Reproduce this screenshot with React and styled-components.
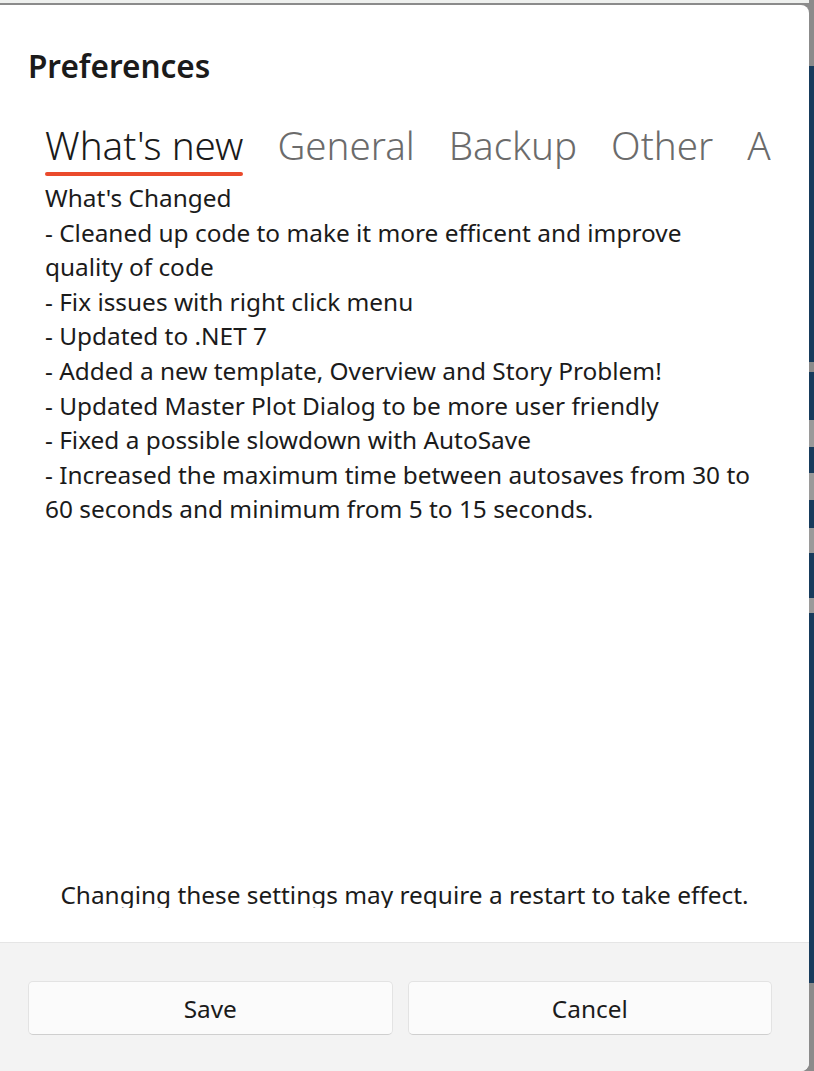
import React from 'react';
import styled, { createGlobalStyle } from 'styled-components';

const GlobalStyle = createGlobalStyle`
  html, body {
    margin: 0;
    padding: 0;
    background: #8b8b8b;
    overflow: hidden;
  }
  body {
    font-family: "Noto Sans", "Open Sans", sans-serif;
  }
`;

// backdrop behind the dialog
const Backdrop = styled.div`
  width: 814px;
  height: 1071px;
  display: flex;
  flex-direction: column;
  background: #8b8b8b;
`;

const TopStrip = styled.div`
  height: 3px;
  background: #eef0ee;
  flex: none;
`;

const Stage = styled.div`
  flex: 1;
  display: flex;
  padding-top: 2px;
  min-height: 0;
`;

const SideStrip = styled.div`
  width: 5px;
  flex: none;
  margin-top: -5px;
  background: linear-gradient(
    to bottom,
    #8b8b8b 0 66px,
    #173b5c 66px 362px,
    #8b8b8b 362px 372px,
    #173b5c 372px 420px,
    #9a9a9a 420px 447px,
    #173b5c 447px 473px,
    #9a9a9a 473px 500px,
    #173b5c 500px 528px,
    #9a9a9a 528px 553px,
    #173b5c 553px 598px,
    #9a9a9a 598px 613px,
    #173b5c 613px 983px,
    #8b8b8b 983px
  );
`;

// dialog
const Dialog = styled.div`
  width: 809px;
  flex: none;
  display: flex;
  flex-direction: column;
  background: #ffffff;
  border-radius: 0 8px 8px 0;
  overflow: hidden;
`;

const Content = styled.div`
  flex: 1;
  display: flex;
  flex-direction: column;
  padding: 0 28px;
  min-height: 0;
`;

const Title = styled.h1`
  margin: 39px 0 0 0;
  font-size: 31.5px;
  line-height: 44px;
  font-weight: 600;
  color: #1b1b1b;
`;

const TabRow = styled.div`
  display: flex;
  gap: 34px;
  margin: 32px 10px 0 17px;
  overflow: hidden;
  white-space: nowrap;
`;

const Tab = styled.div`
  flex: none;
  font-size: 38.5px;
  line-height: 50px;
  font-weight: 300;
  color: ${p => (p.active ? '#1a1a1a' : '#6b6b6b')};
  padding-bottom: 5px;
`;

const Underline = styled.div`
  height: 4px;
  border-radius: 2px;
  background: #ea4a2c;
  margin-top: 2px;
`;

const Notes = styled.div`
  margin: 0 0 0 17px;
  width: 715px;
  font-size: 24.4px;
  line-height: 34.6px;
  color: #1b1b1b;
`;

const Spacer = styled.div`
  flex: 1;
`;

const RestartNote = styled.div`
  text-align: center;
  font-size: 24.4px;
  line-height: 30px;
  height: 28px;
  overflow: hidden;
  color: #1b1b1b;
  margin-bottom: 34px;
`;

const Footer = styled.div`
  flex: none;
  height: 129px;
  background: #f3f3f3;
  border-top: 1px solid #e5e5e5;
  display: grid;
  grid-template-columns: 1fr 1fr;
  gap: 15px;
  padding: 38px 37px 0 28px;
  box-sizing: border-box;
  align-items: start;
`;

const Button = styled.button`
  height: 54px;
  background: #fbfbfb;
  border: 1px solid #e3e3e3;
  border-bottom-color: #cfcfcf;
  border-radius: 5px;
  font-family: inherit;
  font-size: 24.4px;
  color: #1b1b1b;
`;

const tabs = ["What's new", 'General', 'Backup', 'Other', 'About'];

const changes = [
  "What's Changed",
  '- Cleaned up code to make it more efficent and improve quality of code',
  '- Fix issues with right click menu',
  '- Updated to .NET 7',
  '- Added a new template, Overview and Story Problem!',
  '- Updated Master Plot Dialog to be more user friendly',
  '- Fixed a possible slowdown with AutoSave',
  '- Increased the maximum time between autosaves from 30 to 60 seconds and minimum from 5 to 15 seconds.',
];

export default function App() {
  return (
    <>
      <GlobalStyle />
      <Backdrop>
        <TopStrip />
        <Stage>
          <Dialog>
            <Content>
              <Title>Preferences</Title>
              <TabRow>
                {tabs.map((t, i) => (
                  <Tab key={t} active={i === 0}>
                    {t}
                    {i === 0 && <Underline />}
                  </Tab>
                ))}
              </TabRow>
              <Notes>
                {changes.map((line, i) => (
                  <div key={i}>{line}</div>
                ))}
              </Notes>
              <Spacer />
              <RestartNote>Changing these settings may require a restart to take effect.</RestartNote>
            </Content>
            <Footer>
              <Button>Save</Button>
              <Button>Cancel</Button>
            </Footer>
          </Dialog>
          <SideStrip />
        </Stage>
      </Backdrop>
    </>
  );
}
